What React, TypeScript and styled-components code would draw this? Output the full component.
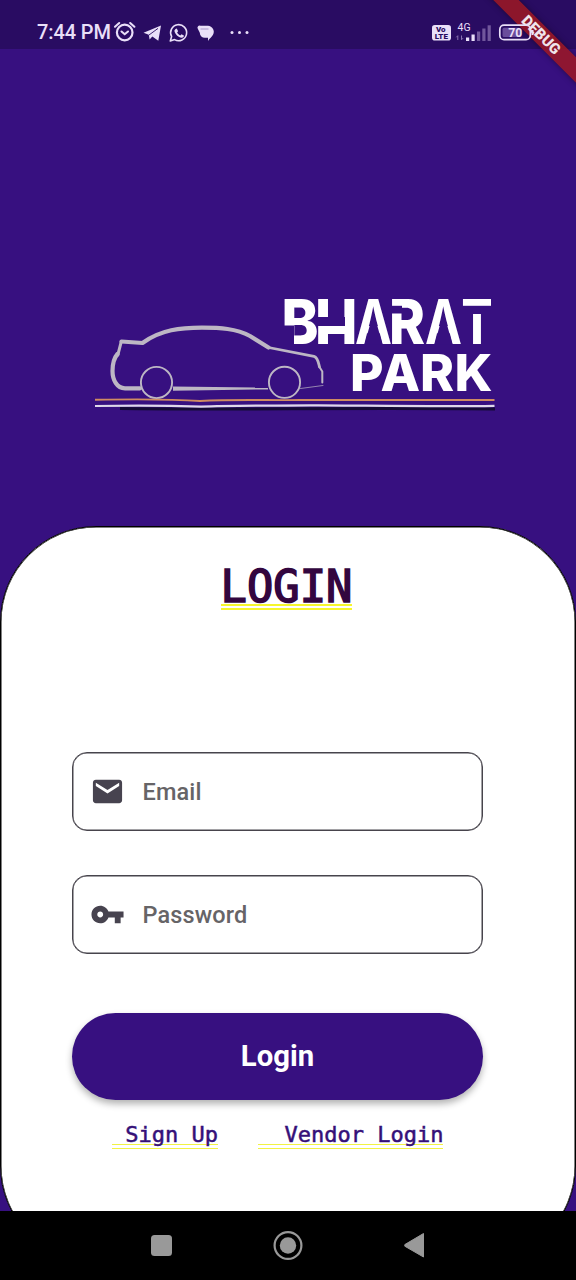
import React from "react";
import styled, { createGlobalStyle } from "styled-components";

const purple = "#371080";
const statusInk = "#e9dff8";

const GlobalStyle = createGlobalStyle`
  * { box-sizing: border-box; }
  html, body { margin: 0; padding: 0; background: ${purple}; }
  body { font-family: Roboto, "Noto Sans", sans-serif; }
`;

const Screen = styled.div`
  position: relative;
  display: flex;
  flex-direction: column;
  width: 576px;
  height: 1280px;
  overflow: hidden;
  background: ${purple};
`;

const StatusBar = styled.header`
  flex: none;
  display: flex;
  align-items: center;
  justify-content: space-between;
  height: 49px;
  padding: 14px 37px 0;
  background: #290c62;
  color: ${statusInk};
`;

const StatusGroup = styled.div`
  display: flex;
  align-items: center;
`;

const Clock = styled.span`
  width: 75px;
  font-size: 20px;
  font-weight: 500;
  line-height: 24px;
  letter-spacing: -0.1px;
  white-space: nowrap;
`;

const StatusIcons = styled.svg`
  position: relative;
  z-index: 1;
  display: block;
  flex: none;
`;

const Ribbon = styled.div`
  position: absolute;
  top: 25.5px;
  left: 461px;
  width: 160px;
  height: 18px;
  transform: rotate(45deg);
  background: rgba(160, 24, 32, 0.83);
  box-shadow: 0 0 6px rgba(0, 0, 0, 0.4);
  color: #f0e4ea;
  font-size: 15px;
  font-weight: 900;
  line-height: 18px;
  text-align: center;
`;

const Body = styled.main`
  flex: 1;
  min-height: 0;
  overflow: hidden;
`;

const Hero = styled.section`
  height: 477px;
  padding: 241px 0 0 90px;
`;

const LogoArt = styled.svg`
  display: block;
`;

const Card = styled.section`
  display: flex;
  flex-direction: column;
  height: 736px;
  padding: 36px 92px 0 71px;
  border: 1px solid #000;
  border-radius: 96px;
  box-shadow: inset 0 0 0 0.5px #000;
  background: #fff;
`;

const Title = styled.h1`
  align-self: center;
  margin: 0 -2px 0 16px;
  height: 52px;
  font-family: "DejaVu Sans Mono", monospace;
  font-size: 43.8px;
  font-weight: 400;
  line-height: 48px;
  color: #33063f;
  -webkit-text-stroke: 1.6px #33063f;
`;

const DoubleLine = styled.span<{ $gap: number; $offset: number; $weight: number; $tone: string }>`
  display: inline-block;
  white-space: pre;
  background-image: linear-gradient(
    transparent ${(p) => p.$offset}px,
    ${(p) => p.$tone} ${(p) => p.$offset}px ${(p) => p.$offset + p.$weight}px,
    transparent ${(p) => p.$offset + p.$weight}px ${(p) => p.$offset + p.$gap}px,
    ${(p) => p.$tone} ${(p) => p.$offset + p.$gap}px ${(p) => p.$offset + p.$gap + p.$weight}px,
    transparent ${(p) => p.$offset + p.$gap + p.$weight}px
  );
`;

const Form = styled.form`
  display: flex;
  flex-direction: column;
  gap: 44px;
  margin-top: 137px;
`;

const Field = styled.label`
  display: flex;
  align-items: center;
  height: 79px;
  padding-left: 17px;
  border: 1px solid #47444c;
  border-radius: 15px;
  box-shadow: inset 0 0 0 0.5px #47444c;
  color: #666467;
  font-size: 23.5px;
  font-weight: 500;
  letter-spacing: 0.1px;
`;

const FieldIcon = styled.svg`
  width: 35px;
  height: 35px;
  margin-right: 17.6px;
  fill: #47434f;
`;

const LoginButton = styled.button`
  height: 87px;
  margin-top: 15px;
  padding: 0 0 2px;
  border: 0;
  border-radius: 44px;
  background: ${purple};
  box-shadow: 0 4px 7px rgba(0, 0, 0, 0.3);
  color: #fff;
  font-family: Roboto, sans-serif;
  font-size: 29.3px;
  font-weight: 700;
`;

const Links = styled.nav`
  display: flex;
  gap: 40px;
  margin: 19px 0 0 40px;
`;

const TextLink = styled.a`
  font-family: "DejaVu Sans Mono", monospace;
  font-size: 22px;
  line-height: 32px;
  color: #351078;
  white-space: pre;
  -webkit-text-stroke: 0.5px #351078;
`;

const NavBar = styled.footer`
  flex: none;
  display: flex;
  align-items: center;
  justify-content: center;
  height: 69px;
  background: #000;
`;

function LeftStatusIcons() {
  return (
    <StatusIcons width="142" height="26" viewBox="112 18 142 26" fill="none" stroke={statusInk}>
      <circle cx="124.7" cy="31.5" r="7.8" strokeWidth="2.2" />
      <path d="M115 25.7l4.2-3.7M134.4 25.7l-4.2-3.7M121.5 30.5l3.2 2.7 3.3-2.7" strokeWidth="2.1" strokeLinecap="round" />
      <path d="M143.5 31.7L161 24.6l-2.7 15.1-6-4.3-2.7 3.1-.8-4.7z" fill={statusInk} stroke="none" />
      <path d="M149 34l9-6.6" stroke="#290c62" strokeWidth=".9" />
      <path d="M170.3 40l1.3-4.5a8 8 0 1 1 3 3.1z" strokeWidth="1.6" strokeLinejoin="round" />
      <path d="M175.5 28l1.3-.4 1.3 2.7-1 1.2c.8 1.5 1.8 2.4 3.2 3l1.2-1.3 2.4 1.2-.2 1.4c-1.2 1.4-3 1.2-5-.1-2.4-1.5-4.4-4.2-4.3-6.2z" fill={statusInk} stroke="none" />
      <path d="M200.5 24.8h7.5a6 6 0 0 1 5 9c-1.2 2.2-3.2 3.4-5 6.2v-3.2h-3a5 5 0 0 1-5.2-5l-2-4A2.1 2.1 0 0 1 200.5 24.8z" fill={statusInk} stroke="none" />
      <path d="M200.5 28h8" stroke="#9b84be" strokeWidth=".8" />
      <g fill={statusInk} stroke="none">
        <circle cx="232" cy="31.5" r="1.5" />
        <circle cx="239.5" cy="31.5" r="1.5" />
        <circle cx="247" cy="31.5" r="1.5" />
      </g>
    </StatusIcons>
  );
}

function RightStatusIcons() {
  return (
    <StatusIcons width="107" height="26" viewBox="432 18 107 26" fontFamily="Roboto, sans-serif">
      <rect x="432" y="24" width="19" height="15.5" rx="2.8" fill={statusInk} />
      <text x="436" y="31.3" fontSize="8" fontWeight="900" fill="#290c62">Vo</text>
      <text x="434.8" y="38.3" fontSize="8" fontWeight="900" fill="#290c62">LTE</text>
      <text x="457.5" y="30" fontSize="10.5" fill={statusInk}>4G</text>
      <path d="M457.8 39v-4.3m-1.5 1.6l1.5-1.6M461.5 34.5v4.3m1.5-1.6l-1.5 1.6" stroke="#8a72b2" strokeWidth="1" fill="none" />
      <g fill={statusInk}>
        <rect x="466" y="36.5" width="3.2" height="3.5" />
        <rect x="471.5" y="33.5" width="3.2" height="6.5" />
      </g>
      <g fill="#71579c">
        <rect x="477" y="30.5" width="3.2" height="9.5" />
        <rect x="482.3" y="27.5" width="3.2" height="12.5" />
        <rect x="487.6" y="24.3" width="3.2" height="15.7" />
      </g>
      <rect x="499.8" y="24.2" width="30.5" height="14.4" rx="4.2" fill="none" stroke={statusInk} strokeWidth="1.7" />
      <rect x="502.5" y="26.8" width="18" height="9.2" rx="1.5" fill="#6a4d9b" />
      <path d="M532.5 29v5" stroke={statusInk} strokeWidth="2" />
      <text x="508.3" y="36.2" fontSize="12.3" fontWeight="700" fill={statusInk}>70</text>
    </StatusIcons>
  );
}

const wordmark = [
  { letter: "B", x: 281.5, width: 37, weight: 800 },
  { letter: "H", x: 315, width: 42.5, weight: 800 },
  { letter: "A", x: 355, width: 37, weight: 700 },
  { letter: "R", x: 389, width: 36, weight: 800 },
  { letter: "A", x: 425, width: 37, weight: 700 },
  { letter: "T", x: 461.5, width: 31, weight: 800 },
];

function Logo() {
  return (
    <LogoArt width="410" height="125" viewBox="90 290 410 125" fill="none">
      <g stroke="#bdb7c4" strokeLinejoin="round" strokeLinecap="round">
        <path d="M140 388.3H125C117 388.3 112.5 380 112.5 371C112.5 363 114 358 117.5 354" strokeWidth="4.2" />
        <path d="M117.8 355L121.3 341.5" strokeWidth="3" />
        <path d="M121.5 341.5L142.5 343C161 329.5 181 327.7 202 327.7C220 327.7 236 328.5 250 336L268.5 347.5" strokeWidth="4.2" />
        <path d="M268.5 347.5L314 356.3C318 357.5 318.5 363 319.5 367" strokeWidth="2.8" />
        <path d="M319.5 367L322.3 371.5V382.5" strokeWidth="2" />
        <path d="M300.5 388.5L323 385.5" strokeWidth=".7" />
        <circle cx="156.5" cy="382.5" r="15.6" strokeWidth="1.9" />
        <circle cx="284.5" cy="382.3" r="15.6" strokeWidth="1.9" />
      </g>
      <path d="M173 386.5L268 387.6V389.4L173 390.7z" fill="#bdb7c4" />
      <path d="M95 399.8C130 399.2 170 399 200 401C235 399 270 400.5 300 400H494.5" stroke="#cf8b62" strokeWidth="1.9" />
      <path d="M120 408.5C230 410 350 407.5 495 409" stroke="#150c35" strokeWidth="3" />
      <path d="M95 406C130 405.3 170 405.5 201 406.6C235 405 280 405.8 310 405.4S430 407 494.5 405.8" stroke="#ded8ea" strokeWidth="2.2" />
      <g fill="#fff" fontFamily="Inter, sans-serif">
        <text y="343.5" fontSize="62" fontWeight="800">
          {wordmark.map(({ letter, x, width, weight }) => (
            <tspan key={x} x={x} fontWeight={weight} textLength={width} lengthAdjust="spacingAndGlyphs">{letter}</tspan>
          ))}
        </text>
        <text x="350 380.5 420 454.5" y="390.8" fontSize="51.5" fontWeight="800">PARK</text>
      </g>
      <g fill={purple}>
        <path d="M283 325.5H294V344.5H283z" />
        <path d="M317 317H345V326H317z" />
        <path d="M373.5 312L382.5 344.5H364.5z" />
        <path d="M391 305.8H402V313.5H391z" />
        <path d="M443.5 312L452.5 344.5H434.5z" />
        <path d="M461 305.8H493V314H461z" />
      </g>
      <path d="M319 326H346V334H319z" fill="#fff" />
    </LogoArt>
  );
}

export default function App() {
  return (
    <>
      <GlobalStyle />
      <Screen>
        <StatusBar>
          <StatusGroup>
            <Clock>7:44 PM</Clock>
            <LeftStatusIcons />
          </StatusGroup>
          <RightStatusIcons />
        </StatusBar>
        <Body>
          <Hero>
            <Logo />
          </Hero>
          <Card>
            <Title>
              <DoubleLine $offset={41} $gap={4} $weight={2} $tone="#f6f62c">LOGIN</DoubleLine>
            </Title>
            <Form>
              <Field>
                <FieldIcon viewBox="0 0 24 24">
                  <path d="M20 4H4c-1.1 0-2 .9-2 2v12c0 1.1.9 2 2 2h16c1.1 0 2-.9 2-2V6c0-1.1-.9-2-2-2zm0 4.3l-8 5-8-5V6l8 5 8-5v2.3z" />
                </FieldIcon>
                Email
              </Field>
              <Field>
                <FieldIcon viewBox="0 0 24 24">
                  <path d="M12.65 10C11.83 7.67 9.61 6 7 6c-3.31 0-6 2.69-6 6s2.69 6 6 6c2.61 0 4.83-1.67 5.65-4H17v4h4v-4h2v-4H12.65zM7 14c-1.1 0-2-.9-2-2s.9-2 2-2 2 .9 2 2-.9 2-2 2z" />
                </FieldIcon>
                Password
              </Field>
              <LoginButton type="button">Login</LoginButton>
            </Form>
            <Links>
              <TextLink>
                <DoubleLine $offset={25} $gap={4} $weight={1} $tone="#f2f244">{" Sign Up"}</DoubleLine>
              </TextLink>
              <TextLink>
                <DoubleLine $offset={25} $gap={4} $weight={1} $tone="#f2f244">{"  Vendor Login"}</DoubleLine>
              </TextLink>
            </Links>
          </Card>
        </Body>
        <NavBar>
          <svg width="276" height="32" viewBox="150 1230 276 32" fill="#999">
            <rect x="151" y="1235" width="21" height="21" rx="3.5" />
            <circle cx="288" cy="1245.5" r="13.4" fill="none" stroke="#999" strokeWidth="2.2" />
            <circle cx="288" cy="1245.5" r="8.2" />
            <path d="M423.5 1233.5V1257L404.8 1246.2V1244.6z" stroke="#999" strokeWidth="1" strokeLinejoin="round" />
          </svg>
        </NavBar>
        <Ribbon>DEBUG</Ribbon>
      </Screen>
    </>
  );
}
